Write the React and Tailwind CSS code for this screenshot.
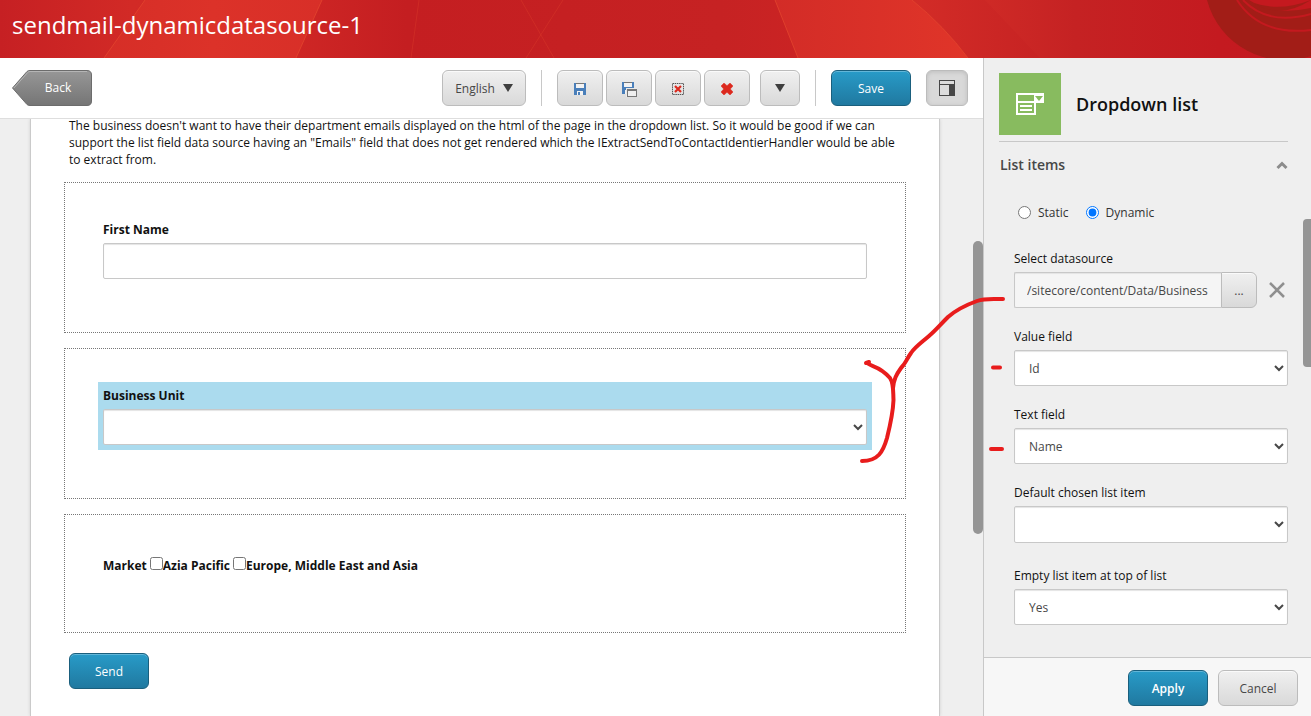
import React from "react";

const greyButton =
  "flex h-9 items-center justify-center rounded-md border border-[#bcbcbc] bg-linear-to-b from-[#f0f0f0] to-[#d9d9d9] pt-0.5 text-[#474747] shadow-[inset_0_1px_0_#fafafa]";
const blueButton =
  "flex h-9 w-20 items-center justify-center rounded-md border border-[#1a5f7d] bg-linear-to-b from-[#289bc8] to-[#2079a0] pt-0.5 text-white shadow-[inset_0_1px_0_#62b6d8]";
const selectBox =
  "block w-full rounded-xs border border-[#c8c8c8] bg-white pl-2.5 text-[#474747] shadow-[inset_0_1px_1px_#e4e4e4]";

function HeaderArt() {
  return (
    <svg
      className="absolute inset-0 h-full w-full"
      viewBox="0 0 1311 58"
      preserveAspectRatio="none"
      aria-hidden="true"
    >
      <defs>
        <linearGradient id="base" x1="0" x2="1" y1="0" y2="0">
          <stop offset="0" stopColor="#c62023" />
          <stop offset="0.1" stopColor="#d22a26" />
          <stop offset="0.22" stopColor="#cf2725" />
          <stop offset="0.31" stopColor="#c41e21" />
          <stop offset="0.55" stopColor="#c62223" />
          <stop offset="0.63" stopColor="#cc2424" />
          <stop offset="0.75" stopColor="#cf2a26" />
          <stop offset="0.82" stopColor="#c52223" />
          <stop offset="0.93" stopColor="#c41a20" />
          <stop offset="1" stopColor="#c4191f" />
        </linearGradient>
        <linearGradient id="bandA" x1="0" x2="1" y1="0" y2="0">
          <stop offset="0" stopColor="#d62e27" />
          <stop offset="0.5" stopColor="#dc3229" />
          <stop offset="1" stopColor="#d82f28" />
        </linearGradient>
        <linearGradient id="bandB" x1="0" x2="1" y1="0" y2="0">
          <stop offset="0" stopColor="#d32c27" />
          <stop offset="1" stopColor="#e03529" />
        </linearGradient>
        <linearGradient id="bandC" x1="0" x2="1" y1="0" y2="0">
          <stop offset="0" stopColor="#d32c27" />
          <stop offset="1" stopColor="#c72323" />
        </linearGradient>
      </defs>
      <rect width="1311" height="58" fill="url(#base)" />
      <path d="M145 0H322L296 58H104Z" fill="url(#bandA)" />
      <path d="M775 0H912Q944 26 968 58H798Z" fill="url(#bandB)" />
      <path d="M912 0H985L1040 58H968Q944 26 912 0Z" fill="url(#bandC)" />
      <g fill="none" stroke="#e5482f" strokeWidth="1">
        <path d="M145 0L104 58M322 0L296 58M775 0L798 58M912 0Q944 26 968 58" opacity="0.7" />
        <path d="M521 0L554 58M563 0L526 58M419 0L411 58" opacity="0.3" />
      </g>
      <path d="M1207 0A81 81 0 0 0 1311 56V0Z" fill="#a21d17" />
      <g fill="none" stroke="#c4191f" strokeWidth="2">
        <path d="M1237 0Q1260 36 1311 30" />
        <path d="M1243 0Q1268 26 1311 14" />
      </g>
      <path d="M1249 0Q1274 16 1311 8V0Z" fill="#c4191f" />
      <path d="M1254 3Q1280 12 1311 0Q1280 20 1254 3Z" fill="#a21d17" />
    </svg>
  );
}

function Disk() {
  return (
    <>
      <path d="M0 1H12V13H0Z" fill="#4a7fba" />
      <path d="M2 1H10V6H2Z" fill="#f3f3f3" />
      <path d="M2 1H10V2H2Z" fill="#777" />
      <path d="M3 9H9V13H3Z" fill="#f3f3f3" />
      <path d="M4 10H6V13H4Z" fill="#4a7fba" />
    </>
  );
}

function SaveIcon() {
  return (
    <svg width="12" height="14" viewBox="0 0 12 14" shapeRendering="crispEdges">
      <Disk />
    </svg>
  );
}

function SaveAsIcon() {
  return (
    <svg width="15" height="16" viewBox="0 0 15 16" shapeRendering="crispEdges">
      <Disk />
      <path d="M4 7H15V16H4Z" fill="#e9e9e9" />
      <path d="M5.5 8.5H14.5V15.5H5.5Z" fill="#efefef" stroke="#777" />
      <path d="M5 8H15V10H5Z" fill="#777" />
    </svg>
  );
}

function ClearSelectionIcon() {
  return (
    <svg width="12" height="12" viewBox="0 0 12 12">
      <rect x="0.5" y="0.5" width="11" height="11" fill="none" stroke="#555" strokeDasharray="1.5 0.7" />
      <path d="M3 3L9 9M9 3L3 9" stroke="#dc291e" strokeWidth="2.2" />
    </svg>
  );
}

function DeleteIcon() {
  return (
    <svg width="12" height="12" viewBox="0 0 12 12">
      <path
        d="M3 0L6 2.7L9 0L12 3L9.3 6L12 9L9 12L6 9.3L3 12L0 9L2.7 6L0 3Z"
        fill="#dc291e"
        stroke="#dc291e"
        strokeLinejoin="round"
        strokeWidth="0.5"
      />
    </svg>
  );
}

function Caret() {
  return (
    <svg className="mb-0.5" width="10" height="8" viewBox="0 0 10 8" aria-hidden="true">
      <path d="M0 0H10L5 8Z" fill="#3f3f3f" />
    </svg>
  );
}

function PanelIcon() {
  return (
    <svg width="16" height="16" viewBox="0 0 16 16" shapeRendering="crispEdges">
      <path d="M0.5 0.5H15.5V15.5H0.5Z" fill="#dcdcdc" stroke="#474747" />
      <path d="M1 4H15V5H1Z" fill="#474747" />
      <path d="M10 5H15V15H10Z" fill="#474747" />
    </svg>
  );
}

function DropdownListIcon() {
  return (
    <svg width="28" height="22" viewBox="0 0 28 22">
      <path d="M0 0H28V10H20V22H0Z" fill="#fff" />
      <path d="M2 2H18V8H2ZM2 10H18V20H2Z" fill="#88bb5f" />
      <path d="M4 12H16V14H4ZM4 16H16V18H4Z" fill="#fff" />
      <path d="M19 3H27L23 8Z" fill="#88bb5f" />
    </svg>
  );
}

function Separator() {
  return <div className="h-9 w-px bg-[#c8c8c8]" />;
}

function Toolbar() {
  return (
    <div className="flex h-[61px] shrink-0 items-center justify-between border-b border-[#dedede] bg-white pr-[15px] pl-3">
      <button type="button" className="relative h-9 w-20 pl-3 text-white">
        <svg className="absolute inset-0" width="80" height="36" viewBox="0 0 80 36" aria-hidden="true">
          <defs>
            <linearGradient id="back" x1="0" x2="0" y1="0" y2="1">
              <stop offset="0" stopColor="#979797" />
              <stop offset="1" stopColor="#757575" />
            </linearGradient>
          </defs>
          <path
            d="M18 0.5H75Q79.5 0.5 79.5 5V31Q79.5 35.5 75 35.5H18Q16 35.5 15 34.5L0.5 18L15 1.5Q16 0.5 18 0.5Z"
            fill="url(#back)"
            stroke="#6c6c6c"
          />
          <path d="M1.8 18L15.8 2.4Q16.5 1.5 18 1.5H75" fill="none" stroke="#b5b5b5" />
        </svg>
        <span className="relative">Back</span>
      </button>
      <div className="flex items-center gap-[15px]">
        <button type="button" aria-haspopup="menu" className={`${greyButton} w-[84px] gap-2`}>
          English <Caret />
        </button>
        <Separator />
        <div className="flex items-center gap-[3px]">
          <button type="button" aria-label="Save form" className={`${greyButton} w-[46px]`}>
            <SaveIcon />
          </button>
          <button type="button" aria-label="Save form as" className={`${greyButton} w-[46px]`}>
            <SaveAsIcon />
          </button>
          <button type="button" aria-label="Clear selection" className={`${greyButton} w-[46px]`}>
            <ClearSelectionIcon />
          </button>
          <button type="button" aria-label="Delete" className={`${greyButton} w-[46px]`}>
            <DeleteIcon />
          </button>
          <button type="button" aria-label="More actions" className={`${greyButton} ml-[7px] w-10`}>
            <Caret />
          </button>
        </div>
        <Separator />
        <button type="button" className={blueButton}>
          Save
        </button>
        <button
          type="button"
          aria-label="Toggle properties panel"
          aria-pressed="true"
          className="flex h-9 w-[42px] items-center justify-center rounded-md border border-[#bcbcbc] bg-[#d9d9d9] shadow-[inset_0_1px_4px_#bdbdbd]"
        >
          <PanelIcon />
        </button>
      </div>
    </div>
  );
}

function FormSheet() {
  return (
    <form className="mr-[43px] ml-[30px] flex-1 border-x border-[#cacaca] bg-white px-[33px] shadow-[0_0_3px_#d0d0d0]">
      <p className="-mt-0.5 px-[5px] leading-[17px] text-[#111]">
        The business doesn't want to have their department emails displayed on the html of the page in the
        dropdown list. So it would be good if we can
        <br />
        support the list field data source having an "Emails" field that does not get rendered which the
        IExtractSendToContactIdentierHandler would be able
        <br />
        to extract from.
      </p>
      <div className="mt-3.5 flex flex-col gap-[15px] font-bold text-[#111]">
        <div className="border border-dotted border-[#777] px-[33px] pt-[33px] pb-12">
          <div className="p-[5px]">
            <label htmlFor="first-name" className="mb-1 block leading-[18px]">
              First Name
            </label>
            <input
              id="first-name"
              type="text"
              className="block h-9 w-full rounded-xs border border-[#c8c8c8] bg-white px-3 shadow-[inset_0_1px_1px_#e4e4e4]"
            />
          </div>
        </div>
        <div className="border border-dotted border-[#777] px-[33px] pt-[33px] pb-12">
          <div className="bg-[#abdbee] p-[5px]">
            <label htmlFor="business-unit" className="mb-1 block leading-[18px]">
              Business Unit
            </label>
            <select id="business-unit" className={`${selectBox} h-9`} />
          </div>
        </div>
        <div className="flex h-[119px] items-start gap-[3px] border border-dotted border-[#777] px-[38px] pt-[41px] leading-5">
          <span>Market</span>
          <label className="flex items-start">
            <input type="checkbox" className="mt-px size-[13px]" />
            Azia Pacific
          </label>
          <label className="flex items-start">
            <input type="checkbox" className="mt-px size-[13px]" />
            Europe, Middle East and Asia
          </label>
        </div>
      </div>
      <button type="button" className={`${blueButton} mt-5 ml-[5px]`}>
        Send
      </button>
    </form>
  );
}

function SelectField({ id, label, value, tall }) {
  return (
    <div className={tall ? "pb-1" : ""}>
      <label htmlFor={id} className="mb-1 block leading-[18px] text-[#111]">
        {label}
      </label>
      <select id={id} className={`${selectBox} ${tall ? "h-[37px]" : "h-9"}`} defaultValue={value}>
        {value && <option>{value}</option>}
      </select>
    </div>
  );
}

function PropertiesPanel() {
  return (
    <aside className="relative flex w-[328px] shrink-0 flex-col border-l border-[#c8c8c8] bg-[#efefef]">
      <div className="min-h-0 flex-1 overflow-hidden pt-[15px] pr-[23px] pl-[15px]">
        <div className="flex items-center gap-[15px] border-b border-[#c8c8c8] pb-1.5">
          <div className="flex size-[62px] items-center justify-center bg-[#88bb5f]">
            <DropdownListIcon />
          </div>
          <h2 className="text-lg font-semibold text-[#111]">Dropdown list</h2>
        </div>
        <button
          type="button"
          aria-expanded="true"
          className="mt-[11px] flex h-6 w-full items-center justify-between pl-px text-sm font-semibold text-[#474747]"
        >
          List items
          <svg width="12" height="9" viewBox="0 0 12 9" aria-hidden="true">
            <path d="M1.5 7L6 2.5L10.5 7" fill="none" stroke="#8c8c8c" strokeWidth="3" />
          </svg>
        </button>
        <div className="pl-[15px]">
          <div className="mt-[26px] flex gap-[17px] pl-1 leading-5 text-[#333]">
            <label className="flex items-start gap-[7px]">
              <input type="radio" name="source" className="mt-[3px] size-[13px]" />
              Static
            </label>
            <label className="flex items-start gap-[7px]">
              <input type="radio" name="source" defaultChecked className="mt-[3px] size-[13px]" />
              Dynamic
            </label>
          </div>
          <div className="mt-[27px] flex flex-col gap-5">
            <div>
              <label htmlFor="datasource" className="mb-1 block leading-[18px] text-[#111]">
                Select datasource
              </label>
              <div className="flex items-center">
                <input
                  id="datasource"
                  type="text"
                  readOnly
                  value="/sitecore/content/Data/Business"
                  className="h-9 min-w-0 flex-1 rounded-l-xs border border-r-0 border-[#c8c8c8] bg-[#f5f5f5] px-3 text-[#474747] shadow-[inset_0_1px_1px_#e4e4e4]"
                />
                <button type="button" aria-label="Browse" className={`${greyButton} w-9 rounded-l-none`}>
                  ...
                </button>
                <button type="button" aria-label="Clear datasource" className="ml-3 pr-[3px]">
                  <svg width="16" height="16" viewBox="0 0 16 16">
                    <path d="M1 1L15 15M15 1L1 15" stroke="#8f8f8f" strokeWidth="2.5" />
                  </svg>
                </button>
              </div>
            </div>
            <SelectField id="value-field" label="Value field" value="Id" />
            <SelectField id="text-field" label="Text field" value="Name" />
            <SelectField id="default-item" label="Default chosen list item" tall />
            <SelectField id="empty-item" label="Empty list item at top of list" value="Yes" />
          </div>
        </div>
      </div>
      <div className="absolute top-[161px] right-0 h-[148px] w-2 rounded-l-sm bg-[#959595]" />
      <footer className="flex shrink-0 justify-end gap-2.5 border-t border-[#c8c8c8] bg-[#f7f7f7] pt-3 pr-[13px] pb-2.5">
        <button type="button" className={`${blueButton} font-semibold`}>
          Apply
        </button>
        <button type="button" className={`${greyButton} w-20`}>
          Cancel
        </button>
      </footer>
    </aside>
  );
}

function Annotation() {
  return (
    <svg
      className="pointer-events-none absolute top-[232px] right-[301px]"
      width="150"
      height="180"
      viewBox="860 290 150 180"
      fill="none"
      stroke="#e81c1c"
      strokeWidth="4"
      strokeLinecap="round"
      strokeLinejoin="round"
      aria-hidden="true"
    >
      <path d="M1003 299C992 299 985 298 977 301C966 305 956 310 948 317C939 326 936 330 929 336C921 343 915 347 911 353C906 360 906 363 901 368C896 375 894 379 893 388" />
      <path d="M866 363L869 362M867 363C872 367 880 366 890 378C894 384 893 392 893.500 400C893 413 890 426 887 438C883 452 878 461 862 461" />
      <path d="M993 367.500H1000M991 449H1002" />
    </svg>
  );
}

export default function App() {
  return (
    <div className="flex h-screen flex-col overflow-hidden bg-[#efefef] font-['Open_Sans',sans-serif] text-xs">
      <header className="relative h-[58px] shrink-0 overflow-hidden bg-[#c62023] px-3">
        <HeaderArt />
        <h1 className="relative pt-[7px] text-2xl leading-9 text-white">sendmail-dynamicdatasource-1</h1>
      </header>
      <div className="relative flex min-h-0 flex-1">
        <main className="relative flex min-w-0 flex-1 flex-col">
          <Toolbar />
          <div className="flex min-h-0 flex-1 overflow-hidden">
            <FormSheet />
          </div>
          <div className="absolute top-[183px] right-0 h-[293px] w-2.5 rounded-full bg-[#959595]" />
        </main>
        <PropertiesPanel />
        <Annotation />
      </div>
    </div>
  );
}
